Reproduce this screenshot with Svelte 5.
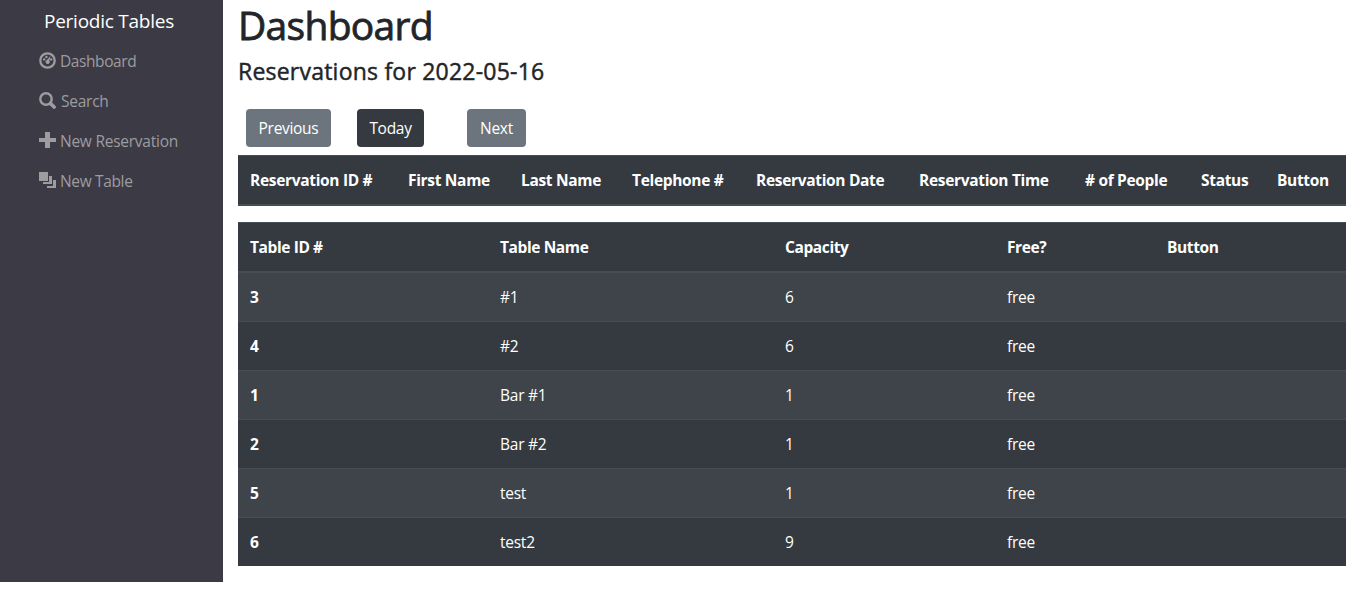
<script>
  const date = '2022-05-16';
  const links = [
    { icon: 'dashboard', label: 'Dashboard', cls: 'dash' },
    { icon: 'search', label: 'Search', cls: 'find' },
    { icon: 'plus', label: 'New Reservation', cls: 'newres' },
    { icon: 'layers', label: 'New Table', cls: 'newtab' }
  ];
  const reservationColumns = [
    { label: 'Reservation ID #', width: 158 },
    { label: 'First Name', width: 113 },
    { label: 'Last Name', width: 111 },
    { label: 'Telephone #', width: 124 },
    { label: 'Reservation Date', width: 163 },
    { label: 'Reservation Time', width: 166 },
    { label: '# of People', width: 116 },
    { label: 'Status', width: 76 },
    { label: 'Button', width: 81 }
  ];
  const tableColumns = [
    { label: 'Table ID #', width: 250 },
    { label: 'Table Name', width: 285 },
    { label: 'Capacity', width: 222 },
    { label: 'Free?', width: 160 },
    { label: 'Button', width: 191 }
  ];
  const tables = [
    { id: 3, name: '#1', capacity: 6 },
    { id: 4, name: '#2', capacity: 6 },
    { id: 1, name: 'Bar #1', capacity: 1 },
    { id: 2, name: 'Bar #2', capacity: 1 },
    { id: 5, name: 'test', capacity: 1 },
    { id: 6, name: 'test2', capacity: 9 }
  ];
</script>

<div class="layout">
  <nav class="sidebar">
    <div class="brand">Periodic Tables</div>
    <ul>
      {#each links as link}
        <li>
          <svg width="17" height="17" viewBox="0 0 17 17" aria-hidden="true">
            {#if link.icon === 'dashboard'}
              <circle cx="8.5" cy="8.5" r="7.2" fill="none" stroke="currentColor" stroke-width="2.3" />
              <circle cx="5.2" cy="7.4" r="1.2" />
              <circle cx="7.4" cy="5" r="1.2" />
              <circle cx="12.2" cy="7.4" r="1.2" />
              <path d="M11.6 3.8 10.4 8.6A2.1 2.1 0 1 1 8 7.9Z" />
            {:else if link.icon === 'search'}
              <circle cx="7" cy="7" r="5.7" fill="none" stroke="currentColor" stroke-width="2.4" />
              <path d="m11.5 11.5 3.6 3.6" fill="none" stroke="currentColor" stroke-width="3.6" stroke-linecap="round" />
            {:else if link.icon === 'plus'}
              <path d="M6 0h5v6h6v4h-6v6H6v-6H0V6h6z" />
            {:else}
              <path d="M0 0h9v9H0zM10 4h3v8H4v-2h6zM14 8h3v8H8v-2h6z" />
            {/if}
          </svg>
          <span class={link.cls}>{link.label}</span>
        </li>
      {/each}
    </ul>
  </nav>

  <main>
    <h1>Dashboard</h1>
    <h4>Reservations for {date}</h4>
    <div class="actions">
      <button class="prev">Previous</button>
      <button class="today">Today</button>
      <button class="next">Next</button>
    </div>

    <table class="reservations">
      <colgroup>
        {#each reservationColumns as column}<col style:width="{column.width}px" />{/each}
      </colgroup>
      <thead>
        <tr>{#each reservationColumns as column}<th>{column.label}</th>{/each}</tr>
      </thead>
    </table>

    <table class="striped">
      <colgroup>
        {#each tableColumns as column}<col style:width="{column.width}px" />{/each}
      </colgroup>
      <thead>
        <tr>{#each tableColumns as column}<th>{column.label}</th>{/each}</tr>
      </thead>
      <tbody>
        {#each tables as table}
          <tr>
            <th>{table.id}</th>
            <td>{table.name}</td>
            <td>{table.capacity}</td>
            <td>free</td>
            <td></td>
          </tr>
        {/each}
      </tbody>
    </table>
  </main>
</div>

<style>
  :global(body) {
    background: #fff;
    color: #212529;
    font-family: 'Open Sans', 'Noto Sans', sans-serif;
    font-size: 15.5px;
    line-height: 24px;
    overflow: hidden;
  }
  * { box-sizing: border-box; }
  .layout { display: flex; width: 1346px; }
  .sidebar {
    flex: none;
    width: 223px;
    height: 582px;
    background: #3c3a44;
  }
  .brand {
    height: 41px;
    padding: 1px 0 0 44px;
    color: #fff;
    font-size: 19px;
    line-height: 40px;
    letter-spacing: -0.25px;
    white-space: nowrap;
  }
  ul { list-style: none; margin: 0; padding: 0 0 0 39px; }
  li {
    display: flex;
    align-items: center;
    height: 40px;
    color: #9d9ca1;
    white-space: nowrap;
    letter-spacing: -0.25px;
  }
  li svg { flex: none; fill: currentColor; margin: 0 4px 2px 0; }
  li .dash { letter-spacing: -0.42px; }
  li .find { padding-left: 1px; }
  li .newtab { letter-spacing: -0.35px; }
  main { flex: none; width: 1108px; margin-left: 15px; }
  h1, h4 { margin: 0; font-weight: 500; white-space: nowrap; }
  h1 {
    height: 56px;
    font-size: 39px;
    line-height: 50px;
    letter-spacing: -0.7px;
    -webkit-text-stroke: 0.8px currentColor;
  }
  h4 {
    height: 53px;
    font-size: 23px;
    line-height: 31px;
    letter-spacing: 0.22px;
    -webkit-text-stroke: 0.45px currentColor;
  }
  .actions { display: flex; height: 46px; padding-left: 8px; }
  button {
    height: 38px;
    padding: 0;
    border: 0;
    border-radius: 4px;
    background: #6c757d;
    color: #fff;
    font: inherit;
    letter-spacing: -0.3px;
  }
  .prev { width: 85px; }
  .today { width: 67px; margin-left: 26px; background: #343a40; }
  .next { width: 59px; margin-left: 43px; }
  table {
    width: 1108px;
    table-layout: fixed;
    border-collapse: separate;
    border-spacing: 0;
    background: #343a40;
    color: #fff;
    margin: 0 0 16px;
  }
  th, td {
    height: 49px;
    padding: 12px;
    border-top: 1px solid #454d55;
    text-align: left;
    line-height: 24px;
    white-space: nowrap;
  }
  td { letter-spacing: -0.25px; }
  th { font-weight: 700; letter-spacing: -0.32px; }
  thead th { height: 51px; border-bottom: 2px solid #454d55; }
  .striped thead th { letter-spacing: -0.4px; }
  .striped tbody tr:first-child > * { height: 48px; border-top: 0; }
  .striped tbody tr:nth-of-type(odd) { background: rgba(255, 255, 255, 0.05); }
</style>
